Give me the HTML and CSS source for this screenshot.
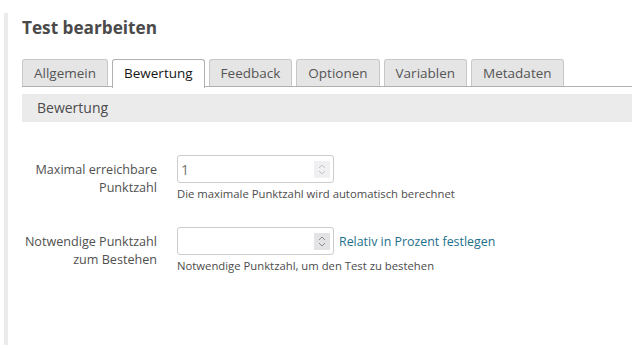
FILE: index.html
```html
<!DOCTYPE html>
<html lang="de">
<head>
    <meta charset="UTF-8">
    <meta name="viewport" content="width=device-width, initial-scale=1.0">
    <title>Test bearbeiten</title>
    <link rel="stylesheet" href="styles.css">
</head>
<body>
    <div class="content">
        <h1>Test bearbeiten</h1>

        <ul class="tabs">
            <li class="tab">Allgemein</li>
            <li class="tab active">Bewertung</li>
            <li class="tab">Feedback</li>
            <li class="tab">Optionen</li>
            <li class="tab">Variablen</li>
            <li class="tab">Metadaten</li>
        </ul>

        <div class="section-header">Bewertung</div>

        <form class="form">
            <div class="form-row">
                <label class="form-label" for="maxPoints">Maximal erreichbare<br>Punktzahl</label>
                <div class="form-field">
                    <div class="field-line">
                        <div class="number-input">
                            <input type="text" id="maxPoints" value="1" readonly>
                            <span class="spinner">
                                <svg width="10" height="13" viewBox="0 0 10 13">
                                    <path d="M2 5 L5 2 L8 5 M2 8 L5 11 L8 8" fill="none" stroke="#c4c4c8" stroke-width="1"/>
                                </svg>
                            </span>
                        </div>
                    </div>
                    <div class="help-text">Die maximale Punktzahl wird automatisch berechnet</div>
                </div>
            </div>

            <div class="form-row">
                <label class="form-label" for="passPoints">Notwendige Punktzahl<br>zum Bestehen</label>
                <div class="form-field">
                    <div class="field-line">
                        <div class="number-input">
                            <input type="text" id="passPoints" value="">
                            <span class="spinner dark">
                                <svg width="10" height="13" viewBox="0 0 10 13">
                                    <path d="M2 5 L5 2 L8 5 M2 8 L5 11 L8 8" fill="none" stroke="#8a8a90" stroke-width="1"/>
                                </svg>
                            </span>
                        </div>
                        <a class="field-link" href="#">Relativ in Prozent festlegen</a>
                    </div>
                    <div class="help-text">Notwendige Punktzahl, um den Test zu bestehen</div>
                </div>
            </div>
        </form>
    </div>
</body>
</html>
```

FILE: styles.css
```css
html, body {
    overflow: hidden;
}

body {
    margin: 0;
    height: 348px;
    font-family: 'Open Sans', 'Liberation Sans', sans-serif;
    color: #4c4c4c;
    background: white;
}

.content {
    margin: 13px 0 0 4px;
    padding: 3px 0 0 14px;
    border-left: 4px solid #ebebeb;
    height: 332px;
    box-sizing: border-box;
}

h1 {
    margin: 0;
    font-size: 17.2px;
    line-height: 24px;
    font-weight: 700;
    color: #4a4a4a;
}

.tabs {
    display: flex;
    list-style: none;
    margin: 19px 0 0;
    padding: 0;
    border-bottom: 1px solid #b0b0b0;
    height: 27px;
}

.tab {
    height: 26px;
    line-height: 26px;
    padding: 0 11px;
    margin-right: 4px;
    font-size: 13.5px;
    color: #555555;
    background: #e5e5e5;
    border: 1px solid #c8c8c8;
    border-bottom: none;
    border-radius: 3px 3px 0 0;
}

.tab.active {
    height: 28px;
    padding: 0 11px;
    background: white;
    color: #161616;
    border-color: #b0b0b0;
}

.section-header {
    margin-top: 7px;
    height: 28px;
    line-height: 28px;
    padding-left: 15px;
    background: #ebebeb;
    font-size: 14px;
    color: #4c4c4c;
}

.form {
    padding-top: 33px;
}

.form-row {
    display: flex;
    margin-bottom: 25px;
}

.form-label {
    width: 135px;
    padding-top: 6px;
    text-align: right;
    font-size: 12.6px;
    line-height: 18px;
    color: #505050;
}

.form-field {
    margin-left: 20px;
}

.field-line {
    display: flex;
    align-items: center;
}

.number-input {
    display: flex;
    align-items: center;
    width: 155px;
    height: 26px;
    border: 1px solid #cccccc;
    border-radius: 3px;
    background: white;
}

.number-input input {
    flex: 1;
    min-width: 0;
    border: none;
    outline: none;
    padding: 0 0 0 3px;
    font-family: 'Open Sans', 'Liberation Sans', sans-serif;
    font-size: 14px;
    color: #757575;
    background: transparent;
}

.spinner {
    display: flex;
    align-items: center;
    justify-content: center;
    width: 16px;
    height: 17px;
    margin-right: 3px;
    background: #f0f0f2;
}

.spinner.dark {
    background: #e3e3e6;
}

.field-link {
    margin-left: 5px;
    font-size: 12.4px;
    color: #1c6f8c;
    text-decoration: none;
}

.help-text {
    margin-top: 3px;
    font-size: 11.3px;
    line-height: 16px;
    color: #4c4c4c;
}
```
